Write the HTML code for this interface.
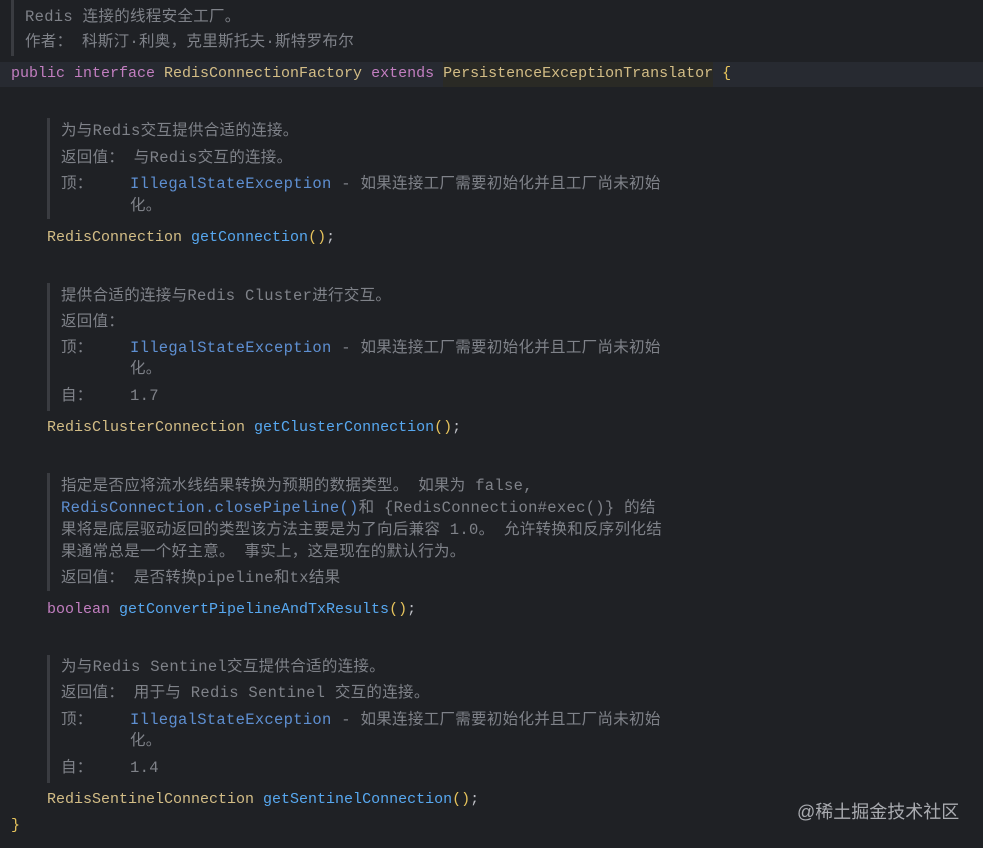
<!DOCTYPE html>
<html><head><meta charset="utf-8"><style>
html,body{margin:0;padding:0}
body{width:983px;height:848px;background:#1f2125;position:relative;overflow:hidden;font-family:"Liberation Mono","Noto Sans CJK SC",monospace;font-size:15px}
.l{position:absolute;white-space:pre;line-height:20px;height:20px}
.d{color:#7f8289;font-size:15.5px;letter-spacing:0.3px}
.c{color:#bcbec4}
.k{color:#c27ec0}
.t{color:#d3bd86}
.m{color:#57a8f0}
.b{color:#5e8fd1}
.p{color:#e6c35c}
.bar{position:absolute;width:3px;background:#3a3c41}
</style></head><body>
<div style="position:absolute;left:0;top:62px;width:983px;height:25px;background:#272a31"></div>
<div style="position:absolute;left:443px;top:62px;width:270px;height:25px;background:#2a2a25"></div>
<div class="bar" style="left:11px;top:0;height:56px"></div>
<div class="bar" style="left:47px;top:118px;height:101px"></div>
<div class="bar" style="left:47px;top:283px;height:128px"></div>
<div class="bar" style="left:47px;top:473px;height:118px"></div>
<div class="bar" style="left:47px;top:655px;height:128px"></div>

<div class="l d" style="left:25px;top:7px">Redis 连接的线程安全工厂。</div>
<div class="l d" style="left:25px;top:32px">作者： 科斯汀·利奥，克里斯托夫·斯特罗布尔</div>
<div class="l" style="left:11px;top:64px"><span class="k">public interface </span><span class="t">RedisConnectionFactory </span><span class="k">extends </span><span class="t">PersistenceExceptionTranslator </span><span class="p">{</span></div>

<div class="l d" style="left:61px;top:121px">为与Redis交互提供合适的连接。</div>
<div class="l d" style="left:61px;top:148px">返回值： 与Redis交互的连接。</div>
<div class="l d" style="left:61px;top:174px">顶：</div>
<div class="l d" style="left:130px;top:174px"><span class="b">IllegalStateException</span> - 如果连接工厂需要初始化并且工厂尚未初始</div>
<div class="l d" style="left:130px;top:196px">化。</div>
<div class="l" style="left:47px;top:228px"><span class="t">RedisConnection </span><span class="m">getConnection</span><span class="p">()</span><span class="c">;</span></div>

<div class="l d" style="left:61px;top:286px">提供合适的连接与Redis Cluster进行交互。</div>
<div class="l d" style="left:61px;top:312px">返回值：</div>
<div class="l d" style="left:61px;top:338px">顶：</div>
<div class="l d" style="left:130px;top:338px"><span class="b">IllegalStateException</span> - 如果连接工厂需要初始化并且工厂尚未初始</div>
<div class="l d" style="left:130px;top:359px">化。</div>
<div class="l d" style="left:61px;top:386px">自：</div>
<div class="l d" style="left:130px;top:386px">1.7</div>
<div class="l" style="left:47px;top:418px"><span class="t">RedisClusterConnection </span><span class="m">getClusterConnection</span><span class="p">()</span><span class="c">;</span></div>

<div class="l d" style="left:61px;top:476px">指定是否应将流水线结果转换为预期的数据类型。 如果为 false,</div>
<div class="l d" style="left:61px;top:498px"><span class="b">RedisConnection.closePipeline()</span>和 {RedisConnection#exec()} 的结</div>
<div class="l d" style="left:61px;top:520px">果将是底层驱动返回的类型该方法主要是为了向后兼容 1.0。 允许转换和反序列化结</div>
<div class="l d" style="left:61px;top:542px">果通常总是一个好主意。 事实上，这是现在的默认行为。</div>
<div class="l d" style="left:61px;top:568px">返回值： 是否转换pipeline和tx结果</div>
<div class="l" style="left:47px;top:600px"><span class="k">boolean </span><span class="m">getConvertPipelineAndTxResults</span><span class="p">()</span><span class="c">;</span></div>

<div class="l d" style="left:61px;top:657px">为与Redis Sentinel交互提供合适的连接。</div>
<div class="l d" style="left:61px;top:683px">返回值： 用于与 Redis Sentinel 交互的连接。</div>
<div class="l d" style="left:61px;top:710px">顶：</div>
<div class="l d" style="left:130px;top:710px"><span class="b">IllegalStateException</span> - 如果连接工厂需要初始化并且工厂尚未初始</div>
<div class="l d" style="left:130px;top:731px">化。</div>
<div class="l d" style="left:61px;top:758px">自：</div>
<div class="l d" style="left:130px;top:758px">1.4</div>
<div class="l" style="left:47px;top:790px"><span class="t">RedisSentinelConnection </span><span class="m">getSentinelConnection</span><span class="p">()</span><span class="c">;</span></div>
<div class="l p" style="left:11px;top:816px">}</div>
<div class="l" style="left:797px;top:801px;font-family:'Liberation Sans','Noto Sans CJK SC',sans-serif;font-size:18px;line-height:22px;height:22px;color:#a9abb0">@稀土掘金技术社区</div>
</body></html>
